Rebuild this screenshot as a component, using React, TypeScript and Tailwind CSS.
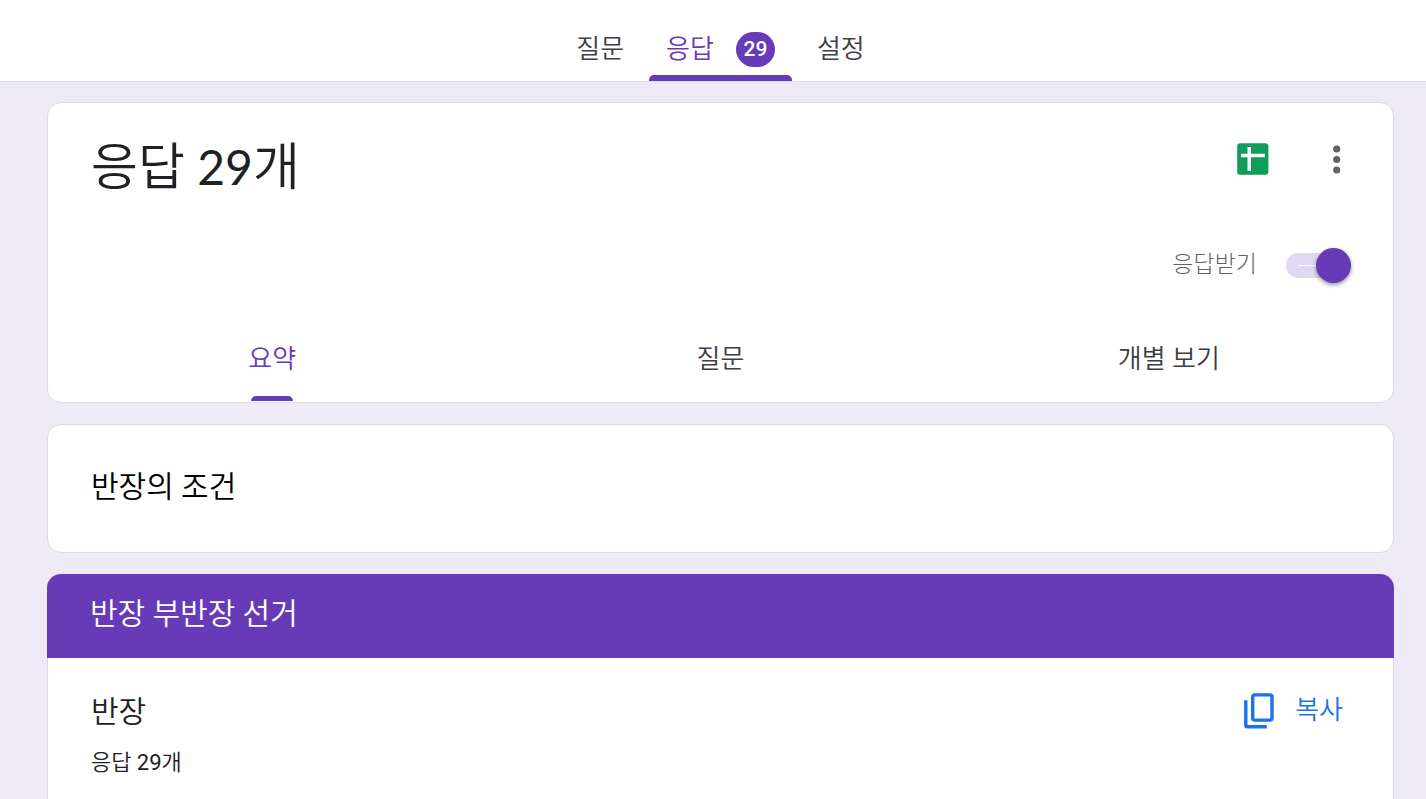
import { useState } from "react";

const viewTabs = ["요약", "질문", "개별 보기"];

function SheetsIcon() {
  return (
    <svg viewBox="0 0 32 32" className="size-8" aria-hidden="true">
      <rect x="0.2" y="0.2" width="31.2" height="31.6" rx="3" fill="#0f9d58" />
      <path d="M4 12.5h24M12.2 4v24" stroke="#fff" strokeWidth="3.4" />
    </svg>
  );
}

function MoreIcon() {
  return (
    <svg viewBox="0 0 8 30" className="h-[30px] w-2" fill="#5f6368" aria-hidden="true">
      <circle cx="3.7" cy="5" r="3.6" />
      <circle cx="3.7" cy="15.5" r="3.6" />
      <circle cx="3.7" cy="26" r="3.6" />
    </svg>
  );
}

function CopyIcon() {
  return (
    <svg viewBox="0 0 30 36" className="h-9 w-[30px]" fill="none" stroke="#1a73e8" strokeWidth="3.4" aria-hidden="true">
      <rect x="8.7" y="1.9" width="19.3" height="25.2" rx="2" />
      <path d="M1.8 7.2v25c0 .9.7 1.6 1.6 1.6h19.4" />
    </svg>
  );
}

export default function App() {
  const [view, setView] = useState("요약");
  const [accepting, setAccepting] = useState(true);

  return (
    <div className="min-h-screen bg-[#eeeaf8] font-['Roboto','Noto_Sans_CJK_KR',sans-serif] font-[350] text-[#202124]">
      <header className="border-b border-[#dadce0] bg-white pr-8 pl-[47px]">
        <nav className="flex h-[81px] items-stretch justify-center gap-[7px] text-[26px] leading-9 text-[#3c4043]">
          <button type="button" className="flex items-start px-[18px] pt-[31px]">질문</button>
          <button type="button" className="flex flex-col justify-between text-[#673ab7]">
            <span className="flex items-center gap-[22px] px-[17px] pt-[31px]">
              응답
              <span className="flex h-[35px] w-[39px] items-center justify-center rounded-full bg-[#673ab7] text-[21px] font-medium text-white">29</span>
            </span>
            <span className="h-1.5 w-full rounded-t-[5px] bg-[#673ab7]" />
          </button>
          <button type="button" className="flex items-start px-[18px] pt-[31px]">설정</button>
        </nav>
      </header>

      <main className="flex flex-col gap-[21px] pt-5 pr-8 pl-[47px]">
        <section className="rounded-[14px] border border-[#dadce0] bg-white">
          <div className="flex items-start justify-between pt-8 pr-[42px] pl-[43px]">
            <h1 className="pt-0.5 text-[51px] leading-[62px]">
              응답 <span className="font-['Lato',sans-serif] text-5xl leading-none font-normal">29</span>개
            </h1>
            <div className="flex items-center gap-16 pt-2 pr-2.5">
              <button type="button" aria-label="Sheets에서 보기"><SheetsIcon /></button>
              <button type="button" aria-label="더보기"><MoreIcon /></button>
            </div>
          </div>
          <div className="flex justify-end pt-11 pr-[42px]">
            <label className="flex cursor-pointer items-center gap-[29px] text-[23px] leading-11 font-light text-[#5f6368]">
              응답받기
              <input
                type="checkbox"
                className="sr-only"
                checked={accepting}
                onChange={(e) => setAccepting(e.target.checked)}
              />
              <span className="flex w-[65px]">
                <span className={`flex h-[25px] w-[59px] items-center rounded-full ${accepting ? "bg-[#e1d8f1]" : "flex-row-reverse bg-[#bdc1c6]"}`}>
                  <span className="ml-3 h-px w-[18px] shrink-0 bg-white" />
                  <span className="size-[35px] shrink-0 rounded-full bg-[#673ab7] shadow-[0_2px_4px_rgba(0,0,0,0.4)]" />
                </span>
              </span>
            </label>
          </div>
          <div className="grid h-[115px] grid-cols-3 pb-px text-[26px] leading-9 text-[#3c4043]">
            {viewTabs.map((tab) => (
              <button
                key={tab}
                type="button"
                onClick={() => setView(tab)}
                className={`flex flex-col items-center justify-between pt-[54px] ${tab === view ? "text-[#673ab7]" : ""}`}
              >
                {tab}
                <span className={`h-[5px] w-[42px] rounded-t-[5px] ${tab === view ? "bg-[#673ab7]" : ""}`} />
              </button>
            ))}
          </div>
        </section>

        <section className="rounded-[14px] border border-[#dadce0] bg-white px-[43px] pt-[38px] pb-[42px]">
          <h2 className="text-[30px] leading-[47px] text-black">반장의 조건</h2>
        </section>

        <section>
          <h2 className="rounded-t-[14px] bg-[#673ab7] px-[43px] pt-[18px] pb-[22px] text-[30px] leading-11 text-white">
            반장 부반장 선거
          </h2>
          <div className="min-h-[141px] border-x border-[#dadce0] bg-white pt-8 pr-[50px] pl-[43px]">
            <div className="flex items-start justify-between">
              <h3 className="text-[30px] leading-11">반장</h3>
              <button type="button" className="flex items-start gap-[21px] pt-[3px] text-[26px] leading-[34px] text-[#1a73e8]">
                <CopyIcon />
                복사
              </button>
            </div>
            <p className="pt-[13px] text-[22px] leading-8">
              응답 <span className="font-normal">29</span>개
            </p>
          </div>
        </section>
      </main>
    </div>
  );
}
